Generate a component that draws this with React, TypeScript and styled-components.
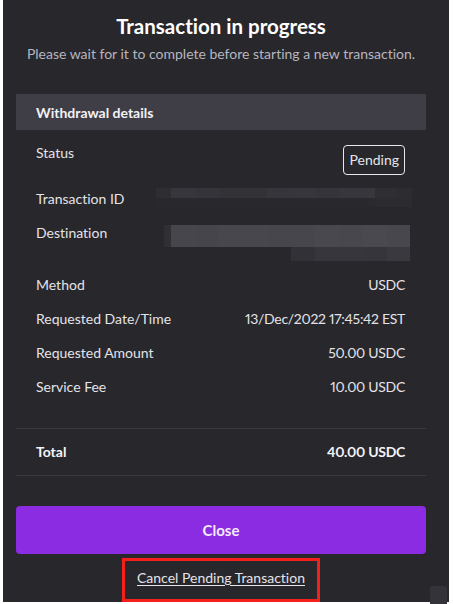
import React from "react";
import styled, { createGlobalStyle } from "styled-components";

const Global = createGlobalStyle`
  html, body { margin: 0; padding: 0; background: #ffffff; }
  body {
    font-family: Lato, "Noto Sans", sans-serif;
    -webkit-font-smoothing: antialiased;
    font-variant-ligatures: none;
    font-feature-settings: "liga" 0, "dlig" 0, "clig" 0;
  }
  button { font-variant-ligatures: none; font-feature-settings: "liga" 0, "dlig" 0; }
`;

const Page = styled.div`
  width: 453px;
  height: 604px;
  position: relative;
  background: #ffffff;
  padding: 0 4px 2px 3px;
  box-sizing: border-box;
`;

const Panel = styled.div`
  height: 602px;
  background: #28272c;
  box-sizing: border-box;
  padding: 14px 23px 0 13px;
  display: flex;
  flex-direction: column;
`;

const Title = styled.h1`
  margin: 0;
  font-size: 20.5px;
  line-height: 24px;
  font-weight: 700;
  color: #ffffff;
  text-align: center;
`;

const Subtitle = styled.p`
  margin: 6px 0 0;
  font-size: 14px;
  line-height: 20px;
  color: #b7b5bf;
  text-align: center;
`;

const SectionHeader = styled.div`
  margin-top: 30px;
  height: 36px;
  background: #3f3e46;
  display: flex;
  align-items: center;
  padding-left: 20px;
  font-size: 14px;
  font-weight: 700;
  color: #f2f1f5;
`;

const Rows = styled.div`
  display: flex;
  flex-direction: column;
  gap: 14px;
  padding: 13px 21px 0 20px;
`;

const Row = styled.div`
  display: flex;
  justify-content: space-between;
  align-items: flex-start;
  font-size: 14px;
  line-height: 20px;
  color: #e4e3e8;
  font-variant-numeric: proportional-nums;
`;

const Label = styled.span<{ $bold?: boolean }>`
  font-weight: ${(p) => (p.$bold ? 700 : 400)};
`;

const Value = styled.span<{ $bold?: boolean }>`
  font-weight: ${(p) => (p.$bold ? 700 : 400)};
  text-align: right;
  letter-spacing: -0.3px;
`;

const Badge = styled.span`
  margin-top: 2px;
  border: 1px solid #e8e7ec;
  border-radius: 4px;
  padding: 4px 5px;
  font-size: 14px;
  line-height: 20px;
  color: #e4e3e8;
`;

const Mosaic = styled.div<{ $width: number; $top: number; $right: number }>`
  width: ${(p) => p.$width}px;
  margin-top: ${(p) => p.$top}px;
  margin-right: ${(p) => p.$right}px;
  display: flex;
  flex-direction: column;
`;

const MosaicRow = styled.div<{ $h: number }>`
  display: flex;
  height: ${(p) => p.$h}px;
`;

const Cell = styled.div<{ $w: number; $c: string }>`
  width: ${(p) => p.$w}px;
  background: ${(p) => p.$c};
  flex-shrink: 0;
`;

const Divider = styled.hr<{ $top: number }>`
  margin: ${(p) => p.$top}px 0 0;
  border: none;
  height: 1px;
  background: #3b3a40;
`;

const TotalRow = styled(Row)`
  padding: 13px 21px 13px 20px;
  font-weight: 700;
  color: #f4f3f7;
`;

const CloseButton = styled.button`
  margin-top: 30px;
  height: 48px;
  border: none;
  border-radius: 4px;
  background: #8b2be2;
  color: #f4ecfc;
  font-family: inherit;
  font-size: 15px;
  font-weight: 700;
`;

const CancelWrap = styled.div`
  display: flex;
  justify-content: center;
  margin-top: 4px;
`;

const CancelLink = styled.a`
  display: inline-block;
  border: 3px solid #f5201c;
  padding: 7px 12px 11px;
  font-size: 14px;
  line-height: 20px;
  color: #e4e3e8;
  text-decoration: underline;
  text-underline-offset: 2px;
`;

const Corner = styled.div`
  position: absolute;
  right: 6px;
  bottom: 0;
  width: 17px;
  height: 18px;
  border-radius: 3px 3px 0 0;
  background: #34333a;
`;

type Block = [number, string];
type MosaicData = { h: number; cells: Block[] }[];

const txRows: MosaicData = [
  {
    h: 10,
    cells: [
      [15, "#2e2d32"],
      [24, "#37363c"],
      [24, "#35343a"],
      [48, "#333237"],
      [24, "#36353b"],
      [24, "#37363c"],
      [24, "#35343a"],
      [24, "#37363c"],
      [12, "#38373d"],
      [21, "#2f2e33"],
      [16, "#2d2c31"],
    ],
  },
  {
    h: 9,
    cells: [
      [148, "#29282d"],
      [71, "#2a292e"],
      [37, "#2c2b30"],
    ],
  },
];

const destRows: MosaicData = [
  {
    h: 22,
    cells: [
      [7, "#302f34"],
      [24, "#47464c"],
      [24, "#46454b"],
      [48, "#48474d"],
      [48, "#47464c"],
      [24, "#49484e"],
      [24, "#48474d"],
      [24, "#4a494f"],
      [23, "#48474d"],
    ],
  },
  {
    h: 14,
    cells: [
      [127, "#28272c"],
      [24, "#323137"],
      [48, "#37363c"],
      [24, "#36353b"],
      [23, "#3a393f"],
    ],
  },
];

const Blur = ({
  width,
  top,
  right,
  rows,
}: {
  width: number;
  top: number;
  right: number;
  rows: MosaicData;
}) => (
  <Mosaic $width={width} $top={top} $right={right}>
    {rows.map((r, i) => (
      <MosaicRow key={i} $h={r.h}>
        {r.cells.map(([w, c], j) => (
          <Cell key={j} $w={w} $c={c} />
        ))}
      </MosaicRow>
    ))}
  </Mosaic>
);

const details: [string, string][] = [
  ["Method", "USDC"],
  ["Requested Date/Time", "13/Dec/2022 17:45:42 EST"],
  ["Requested Amount", "50.00 USDC"],
  ["Service Fee", "10.00 USDC"],
];

export default function App() {
  return (
    <>
      <Global />
      <Page>
        <Panel>
          <Title>Transaction in progress</Title>
          <Subtitle>Please wait for it to complete before starting a new transaction.</Subtitle>
          <SectionHeader>Withdrawal details</SectionHeader>
          <Rows>
            <Row>
              <Label>Status</Label>
              <Badge>Pending</Badge>
            </Row>
            <Row>
              <Label>Transaction ID</Label>
              <Blur width={256} top={-1} right={-7} rows={txRows} />
            </Row>
            <Row>
              <Label>Destination</Label>
              <Blur width={246} top={2} right={-5} rows={destRows} />
            </Row>
            {details.map(([l, v]) => (
              <Row key={l}>
                <Label>{l}</Label>
                <Value>{v}</Value>
              </Row>
            ))}
          </Rows>
          <Divider $top={31} />
          <TotalRow>
            <Label $bold>Total</Label>
            <Value $bold>40.00 USDC</Value>
          </TotalRow>
          <Divider $top={0} />
          <CloseButton>Close</CloseButton>
          <CancelWrap>
            <CancelLink>Cancel Pending Transaction</CancelLink>
          </CancelWrap>
        </Panel>
        <Corner />
      </Page>
    </>
  );
}
